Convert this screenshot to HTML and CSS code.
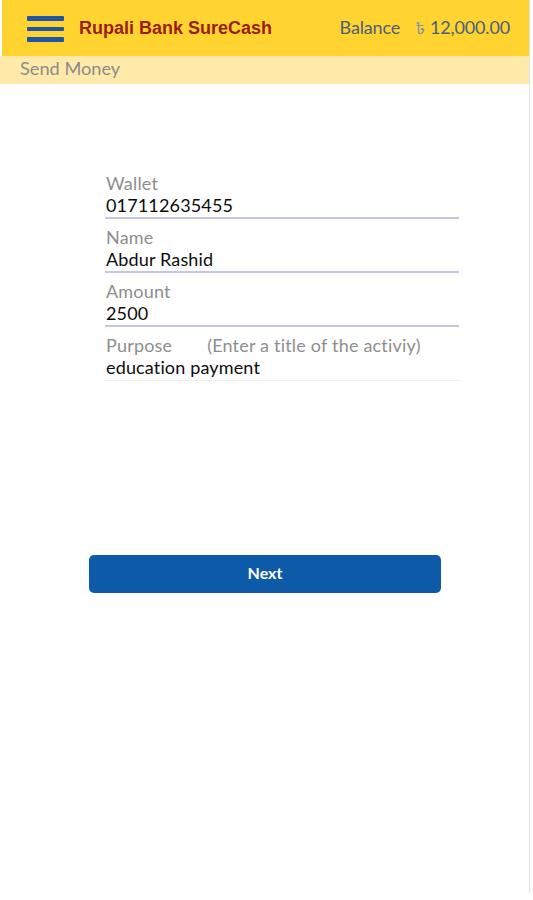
FILE: index.html
```html
<!DOCTYPE html>
<html>
<head>
<meta charset="utf-8">
<link rel="stylesheet" href="styles.css">
</head>
<body>
<div class="app">
  <header class="topbar">
    <div class="menu" aria-label="menu">
      <span></span><span></span><span></span>
    </div>
    <div class="brand">Rupali Bank SureCash</div>
    <div class="balance">Balance <span class="taka">৳</span>12,000.00</div>
  </header>
  <div class="subbar">Send Money</div>
  <main class="content">
    <form class="form">
      <div class="field">
        <div class="label">Wallet</div>
        <div class="value">017112635455</div>
      </div>
      <div class="field">
        <div class="label">Name</div>
        <div class="value">Abdur Rashid</div>
      </div>
      <div class="field">
        <div class="label">Amount</div>
        <div class="value">2500</div>
      </div>
      <div class="field last">
        <div class="label">Purpose <span class="hint">(Enter a title of the activiy)</span></div>
        <div class="value">education payment</div>
      </div>
    </form>
    <div class="actions">
      <button type="button" class="next">Next</button>
    </div>
  </main>
</div>
</body>
</html>
```
FILE: styles.css
```css
html, body {
  margin: 0;
  padding: 0;
  background: #ffffff;
}
.app {
  width: 529px;
  height: 893px;
  border-right: 1px solid #e3e3e3;
  font-family: Lato, "Open Sans", sans-serif;
  box-sizing: content-box;
}
.topbar {
  margin-left: 2px;
  height: 56px;
  background: #ffd330;
  display: flex;
  align-items: center;
  padding-left: 25px;
  padding-right: 19px;
}
.menu {
  display: flex;
  flex-direction: column;
  gap: 6px;
  width: 37px;
  margin-top: 2px;
}
.menu span {
  display: block;
  height: 4.5px;
  border-radius: 1px;
  background: #1f55a3;
}
.brand {
  margin-left: 15px;
  font-family: "Liberation Sans", Arial, sans-serif;
  font-weight: bold;
  font-size: 18px;
  color: #9a1e14;
}
.balance {
  margin-left: auto;
  font-size: 18px;
  color: #4f5e7a;
  letter-spacing: -0.15px;
}
.taka {
  margin: 0 5px 0 11px;
  font-family: "Noto Sans Bengali", "Noto Sans", "DejaVu Sans", sans-serif;
  font-size: 16px;
  color: #8790a6;
}
.subbar {
  height: 28px;
  background: #ffeaaa;
  color: #8c8c8c;
  font-size: 18.2px;
  line-height: 25px;
  padding-left: 20px;
}
.content {
  padding-top: 81px;
}
.form {
  margin-left: 105px;
  width: 354px;
  display: flex;
  flex-direction: column;
}
.field {
  height: 54px;
  padding-top: 7px;
  border-bottom: 2px solid #c2c7e3;
  padding-left: 1px;
  box-sizing: border-box;
}
.field.last {
  border-bottom: 1px solid #eeeeee;
}
.label {
  color: #8e8e8e;
  font-size: 18px;
  letter-spacing: 0.2px;
  line-height: 22px;
}
.hint {
  margin-left: 30px;
}
.value {
  color: #0d0d0d;
  font-size: 18px;
  letter-spacing: 0.15px;
  line-height: 22px;
}
.actions {
  margin-top: 174px;
  padding-left: 89px;
}
.next {
  width: 352px;
  height: 38px;
  background: #0d5aa8;
  border: none;
  border-radius: 5px;
  color: #ffffff;
  font-family: Lato, "Open Sans", sans-serif;
  font-weight: bold;
  font-size: 16px;
  padding: 0 0 3px 0;
}
```
